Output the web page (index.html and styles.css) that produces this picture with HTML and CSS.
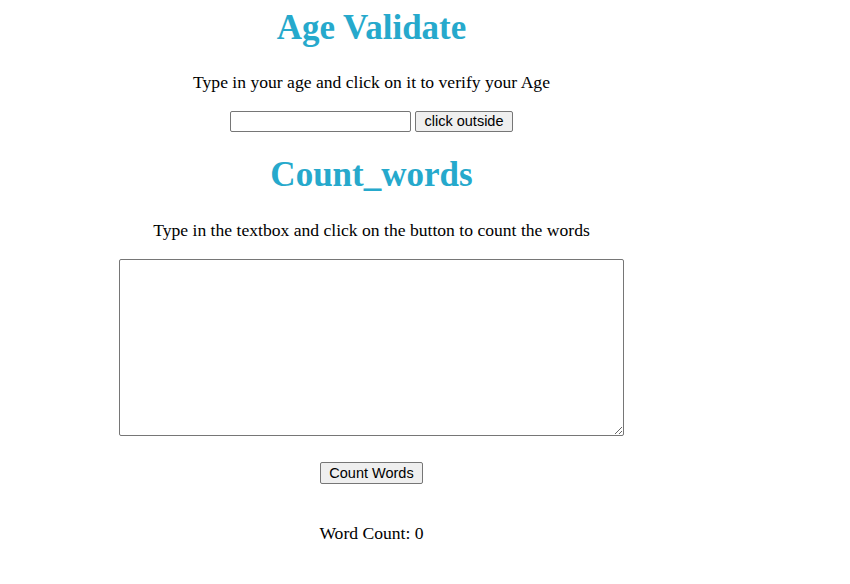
FILE: index.html
```html
<!DOCTYPE html>
<html>
<head>
<meta charset="utf-8">
<title>Age Validate</title>
<link rel="stylesheet" href="styles.css">
</head>
<body>
<div class="page">
  <h1 class="title first">Age Validate</h1>
  <p class="text text1">Type in your age and click on it to verify your Age</p>
  <div class="row">
    <input class="age" type="text"><button class="btn">click outside</button>
  </div>
  <h1 class="title second">Count_words</h1>
  <p class="text text2">Type in the textbox and click on the button to count the words</p>
  <textarea class="area"></textarea>
  <div class="row row2">
    <button class="btn btn2">Count Words</button>
  </div>
  <p class="text count">Word Count: 0</p>
</div>
</body>
</html>
```
FILE: styles.css
```css
html, body {
  margin: 0;
  padding: 0;
  background: #ffffff;
}
.page {
  width: 743px;
  text-align: center;
  font-family: "Liberation Serif", "Times New Roman", serif;
  color: #000;
  padding-top: 8px;
}
.title {
  margin: 0;
  font-size: 35px;
  font-weight: bold;
  color: #26a9cc;
  line-height: 39px;
}
.text {
  margin: 22px 0 0;
  font-size: 17.6px;
  line-height: 20px;
}
.text1 {
  margin-top: 25px;
}
.row {
  margin-top: 19px;
  display: flex;
  justify-content: center;
  align-items: center;
  gap: 4px;
  height: 21px;
}
.age {
  box-sizing: border-box;
  width: 181px;
  height: 21px;
  margin: 0;
  border: 1px solid #767676;
  border-radius: 2px;
  padding: 1px 2px;
  font-family: "Liberation Sans", Arial, sans-serif;
  font-size: 14.5px;
}
.btn {
  box-sizing: border-box;
  width: 98px;
  height: 21px;
  margin: 0;
  padding: 0 4px;
  font-family: "Liberation Sans", Arial, sans-serif;
  font-size: 14.5px;
  line-height: 17px;
  color: #000;
  background: #efefef;
  border: 1px solid #767676;
  border-radius: 2px;
}
.second {
  margin-top: 23px;
}
.text2 {
  margin-top: 26px;
}
.area {
  display: block;
  box-sizing: border-box;
  width: 505px;
  height: 177px;
  margin: 19px auto 0;
  border: 1px solid #767676;
  border-radius: 2px;
  resize: both;
}
.row2 {
  margin-top: 26px;
  height: 22px;
}
.btn2 {
  height: 22px;
  width: 103px;
}
.count {
  margin-top: 39px;
}
```
